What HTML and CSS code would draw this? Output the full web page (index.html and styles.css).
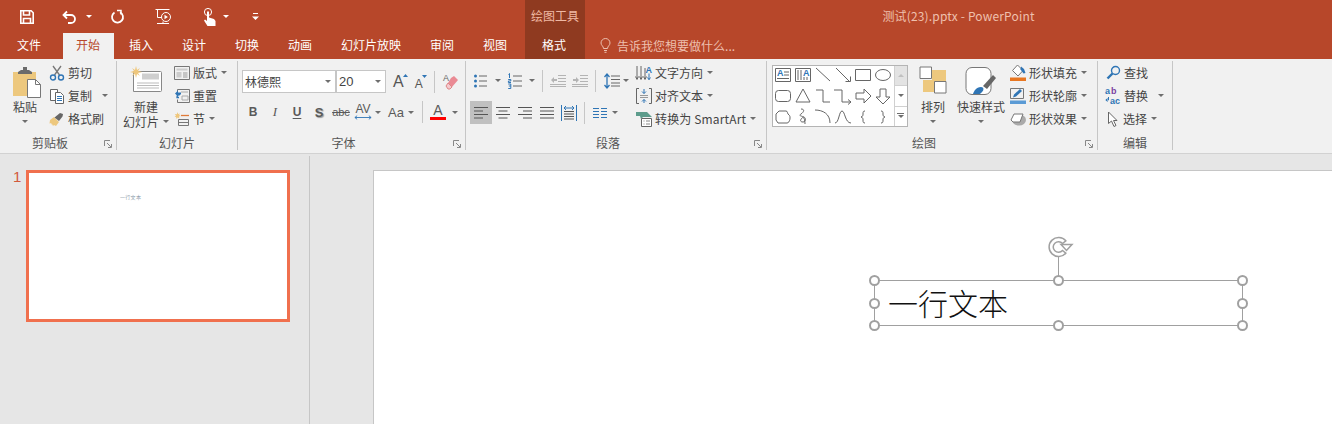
FILE: index.html
```html
<!DOCTYPE html>
<html lang="zh-CN">
<head>
    <meta charset="UTF-8">
    <meta name="viewport" content="width=device-width, initial-scale=1.0">
    <title>测试(23).pptx - PowerPoint</title>
    <link rel="stylesheet" href="styles.css">
</head>
<body>
    <header class="titlebar">
        <div class="qat">
            <svg class="qat-save" width="14" height="14" viewBox="0 0 14 14" fill="none" stroke="#fff" stroke-width="1.6"><path d="M.8.8h10.4l2 2v10.400H.8z"/><path d="M3.500 1v4h6V1M3.500 13V8.500h7V13"/></svg>
            <svg class="qat-undo" width="16" height="14" viewBox="0 0 16 14" fill="none" stroke="#fff" stroke-width="1.8"><path d="M5 1.500L1.500 5 5 8.500M1.500 5H9a4 4 0 0 1 0 8H6"/></svg>
            <span class="caret caret-white qat-undo-caret"></span>
            <svg class="qat-redo" width="14" height="14" viewBox="0 0 14 14" fill="none" stroke="#fff" stroke-width="1.8"><path d="M4.500 2.500A5.500 5.500 0 1 0 10 2.200"/><path d="M7 .5h4v4" stroke-width="1.500"/></svg>
            <svg class="qat-show" width="17" height="17" viewBox="0 0 17 17" fill="none" stroke="#fff"><path d="M.5 1.500h14M2.500 2v7.500h4"/><circle cx="11" cy="9" r="4.500"/><path d="M9.500 6.800l3.400 2.200-3.400 2.200z" fill="#fff" stroke="none"/><path d="M2 15.500h12M8 13.500v2"/></svg>
            <svg class="qat-touch" width="14" height="18" viewBox="0 0 14 18" fill="#fff"><circle cx="5" cy="4" r="3.600" fill="none" stroke="#fff"/><path d="M4 3.500h2v6l5 1.500 1.500 2V18H4.500L1 12.500l1-1 2 1.500z"/></svg>
            <span class="caret caret-white qat-touch-caret"></span>
            <svg class="qat-more" width="7" height="8" viewBox="0 0 7 8" fill="#fff"><path d="M1 0h5v1H1zM0 3.500h7L3.500 7z"/></svg>
        </div>
        <div class="context-title">绘图工具</div>
        <div class="doc-title">测试(23).pptx - PowerPoint</div>
    </header>

    <nav class="tabs">
        <span class="tab tab-file">文件</span>
        <span class="tab tab-active">开始</span>
        <span class="tab">插入</span>
        <span class="tab">设计</span>
        <span class="tab">切换</span>
        <span class="tab">动画</span>
        <span class="tab">幻灯片放映</span>
        <span class="tab">审阅</span>
        <span class="tab">视图</span>
        <span class="tab tab-context">格式</span>
        <span class="tell-me">
            <svg width="11" height="15" viewBox="0 0 11 15" fill="none" stroke="#ecc0b0"><path d="M3.500 10.500C3.500 8 1 7.500 1 5a4.500 4.500 0 0 1 9 0c0 2.500-2.500 3-2.500 5.500zM4 12.500h3M4.500 14.300h2"/></svg>
            告诉我您想要做什么...
        </span>
    </nav>

    <section class="ribbon">
        <!-- 剪贴板 -->
        <div class="group group-clip">
            <div class="group-body">
                <div class="big big-paste">
                    <div class="big-icon">
                        <svg width="30" height="31" viewBox="0 0 30 31"><path d="M1 5h23v24H1z" fill="#edc87e"/><path d="M6 5l3-2h2V0h4v3h2l3 2v2H6z" fill="#6b6b6b"/><path d="M15.500 12.500h8l5 5v13h-13z" fill="#fff" stroke="#777"/><path d="M23.500 12.500v5h5" fill="none" stroke="#777"/></svg>
                    </div>
                    <span>粘贴</span>
                    <span class="caret big-caret"></span>
                </div>
                <div class="col col-clip">
                    <div class="tool">
                        <svg width="16" height="16" viewBox="0 0 16 16" fill="none"><path d="M4 1l6.500 9M12 1L5.500 10" stroke="#777" stroke-width="1.300"/><circle cx="4" cy="12.500" r="2.500" stroke="#2f75b5" stroke-width="1.400"/><circle cx="12" cy="12.500" r="2.500" stroke="#2f75b5" stroke-width="1.400"/></svg>
                        <span>剪切</span>
                    </div>
                    <div class="tool">
                        <svg width="16" height="16" viewBox="0 0 16 16" fill="#fff" stroke="#666"><path d="M1.500 1.500h7v11h-7z"/><path d="M6.500 4.500h5l3 3v8h-8z"/><path d="M8 8.500h5M8 10.500h5M8 12.500h5" stroke="#2f75b5"/></svg>
                        <span>复制</span>
                        <span class="caret caret-copy"></span>
                    </div>
                    <div class="tool">
                        <svg width="16" height="16" viewBox="0 0 16 16"><path d="M1 9l4-3 5 5-3 4-2-1-1 1-1-2-1 .5 .5-1.500-2 .5z" fill="#edc87e"/><path d="M5.500 6.500L11 2l3 1-.5 2.500-3.500 4.500z" fill="#666"/></svg>
                        <span>格式刷</span>
                    </div>
                </div>
            </div>
            <div class="group-label"><span>剪贴板</span><svg class="launcher" width="8" height="8" viewBox="0 0 8 8" fill="none" stroke="#888"><path d="M.5 6V.5H6M3 3l4 4M7.500 4v3.500H4"/></svg></div>
        </div>

        <!-- 幻灯片 -->
        <div class="group group-slides">
            <div class="group-body">
                <div class="big big-new">
                    <div class="big-icon">
                        <svg width="32" height="26" viewBox="0 0 32 26"><path d="M3.500 5.500h27a1 1 0 0 1 1 1v18a1 1 0 0 1-1 1h-27z" fill="#fff" stroke="#888"/><path d="M12 7.500h17v6H12z" fill="#cfcfcf"/><path d="M7 17h22M7 19.500h22M7 22h22" stroke="#bbb"/><path d="M6 0l1 4 3-2-2 3 4 1-4 1 2 3-3-2-1 4-1-4-3 2 2-3-4-1 4-1-2-3 3 2z" fill="#efc77c"/></svg>
                    </div>
                    <span>新建</span>
                    <span class="big-line">幻灯片<i class="caret caret-new"></i></span>
                </div>
                <div class="col col-slides">
                    <div class="tool">
                        <svg width="16" height="16" viewBox="0 0 16 16" fill="none" stroke="#777"><path d="M.5 1.500h15v13H.5z"/><path d="M2.500 3.500h11v2h-11zM2.500 7h5v5.500h-5z" fill="#ccc" stroke="none"/><path d="M9 8h4.500M9 10h4.500M9 12h4.500" stroke="#999"/></svg>
                        <span>版式</span>
                        <span class="caret caret-slide"></span>
                    </div>
                    <div class="tool">
                        <svg width="16" height="16" viewBox="0 0 16 16" fill="none" stroke="#777"><path d="M3.500 5.500v-4h12v13h-12v-3"/><path d="M7 4h7M8 8h6v4H8z" stroke="#aaa"/><path d="M1 5.500l3-3v2h3v2H4v2z" fill="#2f75b5" stroke="none"/><path d="M6 6.500c-2 0-3 1-3 3h2" stroke="#2f75b5" stroke-width="1.300"/></svg>
                        <span>重置</span>
                    </div>
                    <div class="tool">
                        <svg width="16" height="16" viewBox="0 0 16 16" fill="none"><path d="M3.500 1l.6 2 1.900-.6-1 1.700 1.800.9-1.900.5.500 1.900-1.900-1-1 1.500-.400-1.900L.5 5.900l1.500-1.200L.8 3l2 .2z" fill="#efc77c"/><path d="M7 4.500h8" stroke="#e07b39" stroke-width="1.300"/><path d="M4.500 8.500h10v6h-10zM4.500 11.500h10" stroke="#777"/></svg>
                        <span>节</span>
                        <span class="caret caret-slide"></span>
                    </div>
                </div>
            </div>
            <div class="group-label"><span>幻灯片</span></div>
        </div>

        <!-- 字体 -->
        <div class="group group-font">
            <div class="font-rows">
                <div class="font-row-top">
                    <div class="combo combo-font"><span>林德熙</span><i class="caret"></i></div>
                    <div class="combo combo-size"><span>20</span><i class="caret"></i></div>
                    <span class="grow-a">A<svg width="5" height="3" viewBox="0 0 5 3"><path d="M0 3l2.500-3L5 3z" fill="#2f75b5"/></svg></span>
                    <span class="shrink-a">A<svg width="5" height="3" viewBox="0 0 5 3"><path d="M0 0l2.500 3L5 0z" fill="#2f75b5"/></svg></span>
                    <i class="vsep vsep-font"></i>
                    <svg class="eraser" width="16" height="17" viewBox="0 0 16 17"><path d="M8 5l3-2 4 4-6 7-4-4z" fill="#ea8a94"/><path d="M5 10l4 4-2 2H5l-2-3z" fill="#f5c9cd" stroke="#d88"/><text x="0" y="8" class="eraser-a">A</text></svg>
                </div>
                <div class="font-row-bottom">
                    <span class="f f-b">B</span>
                    <span class="f f-i">I</span>
                    <span class="f f-u">U</span>
                    <span class="f f-s">S</span>
                    <span class="f f-abc">abc</span>
                    <span class="f f-av">AV<svg width="18" height="5" viewBox="0 0 20 5" fill="none" stroke="#2f75b5"><path d="M1 2.500h18M3.500 .5l-2.500 2 2.500 2M16.500 .5l2.500 2-2.500 2"/></svg></span>
                    <i class="caret caret-av"></i>
                    <span class="f f-aa">Aa</span>
                    <i class="caret caret-aa"></i>
                    <i class="vsep vsep-color"></i>
                    <span class="f f-color">A</span>
                    <i class="caret caret-color"></i>
                </div>
            </div>
            <div class="group-label"><span>字体</span><svg class="launcher" width="8" height="8" viewBox="0 0 8 8" fill="none" stroke="#888"><path d="M.5 6V.5H6M3 3l4 4M7.500 4v3.500H4"/></svg></div>
        </div>

        <!-- 段落 -->
        <div class="group group-para">
            <div class="group-body">
                <div class="para-rows">
                    <div class="para-row-top">
                        <svg class="p-bullets" width="14" height="16" viewBox="0 0 14 16" fill="none" stroke="#666"><path d="M5 3h8M5 8h8M5 13h8"/><circle cx="1.500" cy="3" r="1.500" fill="#2f75b5" stroke="none"/><circle cx="1.500" cy="8" r="1.500" fill="#2f75b5" stroke="none"/><circle cx="1.500" cy="13" r="1.500" fill="#2f75b5" stroke="none"/></svg>
                        <i class="caret caret-list"></i>
                        <svg class="p-numbers" width="14" height="16" viewBox="0 0 14 16" fill="none" stroke="#666"><path d="M5 3h9M5 8h9M5 13h9"/><path d="M1.500 .5v4.500M.500 1.500l1-1M.2 6.500h2.600v1.500H.4v1.500h2.600M.2 11h2.600v4.500H.2M.8 13h2" stroke="#2f75b5"/></svg>
                        <i class="caret caret-list"></i>
                        <i class="vsep vsep-para1"></i>
                        <svg class="p-outdent" width="16" height="12" viewBox="0 0 16 12" fill="none" stroke="#b4b4b4"><path d="M8 .5h8M8 3.500h8M8 6.500h8M0 9.500h16M0 11.500h16"/><path d="M1 5l3-3v2h3v2H4v2z" fill="#b4b4b4" stroke="none"/></svg>
                        <svg class="p-indent" width="16" height="12" viewBox="0 0 16 12" fill="none" stroke="#b4b4b4"><path d="M8 .5h8M8 3.500h8M8 6.500h8M0 9.500h16M0 11.500h16"/><path d="M7 5L4 2v2H1v2h3v2z" fill="#b4b4b4" stroke="none"/></svg>
                        <i class="vsep vsep-para2"></i>
                        <svg class="p-spacing" width="16" height="16" viewBox="0 0 16 16" fill="none"><path d="M7 3h9M7 6.500h9M7 10h9M7 13h9" stroke="#666"/><path d="M3 1v14M.5 4L3 1l2.500 3M.5 12L3 15l2.500-3" stroke="#2f75b5" stroke-width="1.300"/></svg>
                        <i class="caret caret-spacing"></i>
                    </div>
                    <div class="para-row-bottom">
                        <span class="align align-active"><svg width="14" height="12" viewBox="0 0 14 12" stroke="#555"><path d="M0 .5h14M0 4h9M0 7.500h14M0 11h9"/></svg></span>
                        <span class="align"><svg width="14" height="12" viewBox="0 0 14 12" stroke="#555"><path d="M0 .5h14M2.500 4h9M0 7.500h14M2.500 11h9"/></svg></span>
                        <span class="align"><svg width="14" height="12" viewBox="0 0 14 12" stroke="#555"><path d="M0 .5h14M5 4h9M0 7.500h14M5 11h9"/></svg></span>
                        <span class="align"><svg width="14" height="12" viewBox="0 0 14 12" stroke="#555"><path d="M0 .5h14M0 4h14M0 7.500h14M0 11h14"/></svg></span>
                        <span class="align"><svg width="16" height="16" viewBox="0 0 16 16" fill="none"><path d="M3 6.500h10M3 9h10M3 11.500h10M3 14h10" stroke="#555"/><path d="M.5 0v16M15.500 0v16M3 3h10M5 1L3 3l2 2M11 1l2 2-2 2" stroke="#2f75b5"/></svg></span>
                        <i class="vsep vsep-para3"></i>
                        <svg class="p-cols" width="14" height="10" viewBox="0 0 14 10" stroke="#2f75b5"><path d="M0 .5h6M8 .5h6M0 3.500h6M8 3.500h6M0 6.500h6M8 6.500h6M0 9.500h6M8 9.500h6"/></svg>
                        <i class="caret caret-cols"></i>
                    </div>
                </div>
                <div class="col col-para">
                    <div class="tool">
                        <svg width="16" height="16" viewBox="0 0 16 16" fill="none"><path d="M1 1v13M5 1v13M9 3v11M-.5 11.500l1.500 3 1.500-3M3.500 11.500l1.500 3 1.500-3M7.500 11.500l1.500 3 1.500-3" stroke="#666"/><text x="9.500" y="7.500" class="dir-a">A</text><path d="M13 8.500v6M11.500 12.500l1.500 2.200 1.500-2.200" stroke="#2f75b5"/></svg>
                        <span>文字方向</span>
                        <span class="caret caret-slide"></span>
                    </div>
                    <div class="tool">
                        <svg width="16" height="16" viewBox="0 0 16 16" fill="none"><path d="M3 .5H.5v15H3M13 .5h2.500v15H13" stroke="#666"/><path d="M4 7.500h8M4 9.500h8" stroke="#999"/><path d="M8 1v4.500M6 3.500l2 2 2-2M8 15v-3.500M6 13.500l2-2 2 2" stroke="#2f75b5"/></svg>
                        <span>对齐文本</span>
                        <span class="caret caret-slide"></span>
                    </div>
                    <div class="tool">
                        <svg width="16" height="16" viewBox="0 0 16 16"><path d="M0 1h11l5 5h-9l-2 2-1-3H0z" fill="#5d9c8c"/><path d="M5.500 7.500h10v8h-10z" fill="#fff" stroke="#666"/><path d="M7.500 10h1M10 10h4M7.500 13h1M10 13h4" stroke="#888"/></svg>
                        <span class="smartart">转换为 SmartArt</span>
                        <span class="caret caret-slide"></span>
                    </div>
                </div>
            </div>
            <div class="group-label"><span>段落</span><svg class="launcher" width="8" height="8" viewBox="0 0 8 8" fill="none" stroke="#888"><path d="M.5 6V.5H6M3 3l4 4M7.500 4v3.500H4"/></svg></div>
        </div>

        <!-- 绘图 -->
        <div class="group group-draw">
            <div class="group-body">
                <div class="gallery">
                    <div class="shapes">
                        <svg class="shape" viewBox="0 0 20 20"><path d="M2.500 4.500h15v13h-15z"/><text x="4" y="12" class="shape-a">A</text><path d="M11 8h5M11 11h5M4 14.500h12"/></svg>
                        <svg class="shape" viewBox="0 0 20 20"><path d="M2.500 4.500h15v13h-15z"/><text x="10" y="12" class="shape-a">A</text><path d="M5 6v10M8 6v10M11 13v3M14 13v3"/></svg>
                        <svg class="shape" viewBox="0 0 20 20"><path d="M3 4l14 13"/></svg>
                        <svg class="shape" viewBox="0 0 20 20"><path d="M3 4l14 14M12.500 17.500H17.500V12.500"/></svg>
                        <svg class="shape" viewBox="0 0 20 20"><path d="M2.500 5.500h15v11h-15z"/></svg>
                        <svg class="shape" viewBox="0 0 20 20"><ellipse cx="10" cy="11" rx="7.500" ry="5.500"/></svg>
                        <svg class="shape" viewBox="0 0 20 20"><rect x="2.500" y="5.500" width="15" height="11" rx="3"/></svg>
                        <svg class="shape" viewBox="0 0 20 20"><path d="M10 4l7 13H3z"/></svg>
                        <svg class="shape" viewBox="0 0 20 20"><path d="M3 5h7v12h7"/></svg>
                        <svg class="shape" viewBox="0 0 20 20"><path d="M1 5h8v12h9M15 14.500l3 2.500-3 2.500"/></svg>
                        <svg class="shape" viewBox="0 0 20 20"><path d="M3 8h8V4l7 7-7 7v-4H3z"/></svg>
                        <svg class="shape" viewBox="0 0 20 20"><path d="M7 4h6v8h4l-7 7-7-7h4z"/></svg>
                        <svg class="shape" viewBox="0 0 20 20"><path d="M3 8l3-3h7c2 0 1 3 3 4s1 8-2 8H5l-2-3z"/></svg>
                        <svg class="shape" viewBox="0 0 20 20"><path d="M8 3c4 0 3 3 0 5s1 2 3 3 2 5-1 5-3-2-1-4 3 2 3 6"/></svg>
                        <svg class="shape" viewBox="0 0 20 20"><path d="M2 4c8 0 15 4 15 13"/></svg>
                        <svg class="shape" viewBox="0 0 20 20"><path d="M2 17C6 17 6 5 9 5s3 12 9 12"/></svg>
                        <svg class="shape" viewBox="0 0 20 20"><path d="M12 5c-2 0-2 1-2 3s0 2-2 3c2 1 2 1 2 3s0 3 2 3"/></svg>
                        <svg class="shape" viewBox="0 0 20 20"><path d="M8 5c2 0 2 1 2 3s0 2 2 3c-2 1-2 1-2 3s0 3-2 3"/></svg>
                    </div>
                    <div class="gallery-scroll">
                        <span class="scroll-up"><i class="caret caret-up"></i></span>
                        <span><i class="caret"></i></span>
                        <span class="scroll-more"><i class="caret"></i></span>
                    </div>
                </div>
                <div class="big big-arrange">
                    <div class="big-icon">
                        <svg width="28" height="28" viewBox="0 0 28 28"><path d="M13 4h14v11H13zM4 14h14v12H4z" fill="#edc87e"/><path d="M1 1h11.500v11.500H1zM15.500 15.500H27V27H15.500z" fill="#fff" stroke="#777"/></svg>
                    </div>
                    <span>排列</span>
                    <span class="caret big-caret"></span>
                </div>
                <div class="big big-style">
                    <div class="big-icon">
                        <svg width="32" height="30" viewBox="0 0 32 30"><rect x="1" y=".5" width="25" height="27" rx="6" fill="#fff" stroke="#777"/><path d="M18 19L28 8l3 3-9 11z" fill="#666"/><path d="M8 27c1-3 3-7 8-7 3 0 3 3 1 5s-2 2-3 2z" fill="#2f75b5"/></svg>
                    </div>
                    <span>快速样式</span>
                    <span class="caret big-caret"></span>
                </div>
                <div class="col col-format">
                    <div class="tool">
                        <svg width="16" height="16" viewBox="0 0 16 16"><path d="M7.500 0l5.500 5.500-5 5.500L2.500 5.500z" fill="#fff" stroke="#777"/><path d="M11 1.500l3 2.500 1.500 4-2 .5-3-4z" fill="#2f75b5"/><path d="M0 12.500h16V16H0z" fill="#e87722"/></svg>
                        <span>形状填充</span>
                        <span class="caret caret-slide"></span>
                    </div>
                    <div class="tool">
                        <svg width="16" height="16" viewBox="0 0 16 16" fill="none"><path d="M.5 .5h13v10H.5z" stroke="#777"/><path d="M3 9.500l1-3 6-5.500 2 2-6 5.500z" fill="#2f75b5"/><path d="M0 12.500h16V16H0z" fill="#5b9bd5"/></svg>
                        <span>形状轮廓</span>
                        <span class="caret caret-slide"></span>
                    </div>
                    <div class="tool">
                        <svg width="16" height="14" viewBox="0 0 16 14"><ellipse cx="9" cy="8" rx="7" ry="5.500" fill="#aaa"/><path d="M1 8l3-6h9l-3 8H3z" fill="#fff" stroke="#777"/></svg>
                        <span>形状效果</span>
                        <span class="caret caret-slide"></span>
                    </div>
                </div>
            </div>
            <div class="group-label"><span>绘图</span><svg class="launcher" width="8" height="8" viewBox="0 0 8 8" fill="none" stroke="#888"><path d="M.5 6V.5H6M3 3l4 4M7.500 4v3.500H4"/></svg></div>
        </div>

        <!-- 编辑 -->
        <div class="group group-edit">
            <div class="group-body">
                <div class="col col-edit">
                    <div class="tool">
                        <svg width="15" height="15" viewBox="0 0 15 15" fill="none" stroke="#2f75b5"><circle cx="9.500" cy="5.500" r="4" stroke-width="1.400"/><path d="M6.500 8.500L1.500 13.500" stroke-width="2.400"/></svg>
                        <span>查找</span>
                    </div>
                    <div class="tool">
                        <svg width="16" height="16" viewBox="0 0 16 16" class="replace-icon"><text x="0" y="6" class="rep-ab">a</text><text x="6" y="6" class="rep-b">b</text><text x="5" y="16" class="rep-ac">ac</text><path d="M3.500 9v3H1M2.500 10.500L.8 12l1.700 1.500" fill="none" stroke="#2f75b5"/></svg>
                        <span>替换</span>
                        <span class="caret caret-replace"></span>
                    </div>
                    <div class="tool">
                        <svg width="14" height="16" viewBox="0 0 14 16"><path d="M2.500 1v11.500l3-2.500 2.500 5.500 2-1L7.500 9.500H11z" fill="#fff" stroke="#666"/></svg>
                        <span>选择</span>
                        <span class="caret caret-slide"></span>
                    </div>
                </div>
            </div>
            <div class="group-label"><span>编辑</span></div>
        </div>
    </section>

    <main class="workspace">
        <aside class="thumbs">
            <span class="thumb-num">1</span>
            <div class="thumb">
                <span class="thumb-text">一行文本</span>
            </div>
        </aside>
        <div class="canvas">
            <div class="slide">
                <div class="selection">
                    <span class="slide-text">一行文本</span>
                    <i class="stem"></i>
                    <svg class="rotate" width="28" height="22" viewBox="0 0 28 22" fill="#fff" stroke="#a0a0a0" stroke-width="1.500"><path d="M18.800 4.800A9.500 9.500 0 1 0 18.800 17.200L15.500 14.500A5.300 5.300 0 1 1 15.500 7.500z"/><path d="M14 8.500h11l-5.500 6z"/></svg>
                    <i class="handle h-tl"></i><i class="handle h-tc"></i><i class="handle h-tr"></i>
                    <i class="handle h-ml"></i><i class="handle h-mr"></i>
                    <i class="handle h-bl"></i><i class="handle h-bc"></i><i class="handle h-br"></i>
                </div>
            </div>
        </div>
    </main>
</body>
</html>
```

FILE: styles.css
```css
* { box-sizing: border-box; }
html, body { margin: 0; height: 100%; }
body {
    width: 1332px;
    height: 424px;
    overflow: hidden;
    font-family: "Noto Sans CJK SC", "Liberation Sans", sans-serif;
    font-size: 12px;
    color: #444;
    background-color: #e6e6e6;
}
i { font-style: normal; display: block; }
svg { display: block; flex: none; overflow: visible; }

.caret {
    display: block;
    flex: none;
    width: 0;
    height: 0;
    border-top: 3px solid #6e6e6e;
    border-left: 3px solid transparent;
    border-right: 3px solid transparent;
}
.caret-white { border-top-color: #fff; }
.caret-up { border-top: none; border-bottom: 3px solid #c0c0c0; }

/* title bar */
.titlebar { display: flex; height: 33px; background-color: #b7472a; color: #fff; }
.qat { width: 525px; display: flex; align-items: center; padding-left: 20px; }
.qat-undo { margin-left: 28px; }
.qat-undo-caret { margin-left: 8px; }
.qat-redo { margin-left: 18px; }
.qat-show { margin-left: 31px; }
.qat-touch { margin-left: 31px; }
.qat-touch-caret { margin-left: 6px; }
.qat-more { margin-left: 23px; }
.context-title { width: 60px; line-height: 32px; text-align: center; background-color: #8f3a20; color: #efb9a4; }
.doc-title { flex: 1; line-height: 32px; text-align: center; letter-spacing: .16px; color: #efc0ae; }

/* tabs */
.tabs { display: flex; height: 26px; background-color: #b7472a; color: #fff; }
.tab { padding: 0 15px 0 14px; line-height: 24px; white-space: nowrap; }
.tab-file { width: 63px; padding-left: 17px; padding-right: 0; }
.tab-active { width: 51px; padding: 0 0 0 13px; background-color: #f1f1f1; color: #b7472a; }
.tab-active + .tab { padding-left: 15px; }
.tab-context { width: 60px; margin-left: 3px; padding: 0 0 0 17px; background-color: #8f3a20; }
.tell-me { display: flex; align-items: center; gap: 6px; margin-left: 15px; padding-bottom: 1px; color: #edbfae; }

/* ribbon */
.ribbon { display: flex; height: 95px; padding-top: 2px; background-color: #f1f1f1; border-bottom: 1px solid #d2d2d2; }
.group { display: flex; flex-direction: column; height: 89px; border-right: 1px solid #c6c6c6; }
.group-clip { width: 117px; }
.group-slides { width: 121px; }
.group-font { width: 228px; }
.group-para { width: 301px; }
.group-draw { width: 331px; }
.group-edit { width: 75px; }
.group-body { flex: 1; display: flex; }
.group-label { display: flex; align-items: center; height: 14px; padding-bottom: 2px; color: #555; }
.group-label span { flex: 1; text-align: center; }
.launcher { margin: 4px 4px 0 4px; }

.col { display: flex; flex-direction: column; }
.tool { display: flex; align-items: center; height: 23px; white-space: nowrap; }
.tool span:not(.caret) { margin-left: 3px; }
.caret-slide { margin-left: 4px; }
.caret-copy { margin-left: 10px; }
.caret-replace { margin-left: 10px; }
.smartart { letter-spacing: .15px; }

.big { display: flex; flex-direction: column; align-items: center; white-space: nowrap; }
.big-icon { height: 38px; padding-bottom: 1px; display: flex; align-items: flex-end; }
.big span { line-height: 15px; }
.big-caret { margin-top: 6px; }
.big-line { display: flex; align-items: center; }

.big-paste { width: 26px; margin-left: 12px; }
.big-paste .big-icon { align-self: flex-start; }
.col-clip { margin-left: 11px; }
.big-new { width: 46px; margin-left: 6px; }
.big-new .big-icon { padding-bottom: 7px; }
.big-new svg { margin-right: 1px; }
.caret-new { margin-left: 4px; }
.col-slides { margin-left: 5px; }

/* font group */
.font-rows { flex: 1; padding-left: 4px; }
.font-row-top { display: flex; align-items: center; height: 32px; padding-top: 9px; }
.combo {
    display: flex;
    align-items: center;
    justify-content: space-between;
    height: 23px;
    padding: 0 4px 0 2px;
    background-color: #fff;
    border: 1px solid #c6c6c6;
}
.combo-font { width: 94px; }
.combo-size { width: 50px; font-family: "Liberation Sans", sans-serif; font-size: 13px; }
.grow-a, .shrink-a { display: flex; font-family: "Liberation Sans", sans-serif; color: #555; }
.grow-a { margin-left: 7px; font-size: 16px; line-height: 18px; }
.shrink-a { margin-left: 7px; font-size: 12px; line-height: 14px; padding-top: 4px; }
.grow-a svg { margin: 1px 0 0 -1px; }
.shrink-a svg { margin: -2px 0 0 -1px; }
.vsep { flex: none; width: 1px; background-color: #c6c6c6; }
.vsep-font { height: 22px; margin-left: 7px; }
.eraser { margin-left: 8px; }
.eraser-a { font: 9px "Liberation Sans", sans-serif; fill: #666; }

.font-row-bottom { display: flex; align-items: center; height: 24px; margin-top: 7px; font-family: "Liberation Sans", sans-serif; color: #5a5a5a; }
.f { display: block; text-align: center; flex: none; }
.f-b { width: 22px; font-weight: bold; font-size: 12px; }
.f-i { width: 22px; font-style: italic; font-family: "Liberation Serif", serif; font-size: 13px; }
.f-u { width: 22px; text-decoration: underline; text-underline-offset: 2px; font-size: 12px; font-weight: bold; }
.f-s { width: 22px; font-weight: bold; font-size: 13px; text-shadow: 1px 1px 1px #999; }
.f-abc { width: 22px; text-decoration: line-through; font-size: 11px; }
.f-av { width: 22px; font-size: 12px; line-height: 11px; }
.f-av svg { margin: 0 auto; }
.caret-av { margin-left: 1px; }
.f-aa { width: 20px; margin-left: 5px; font-size: 13px; }
.caret-aa { margin-left: 2px; }
.vsep-color { height: 22px; margin-left: 8px; }
.f-color { width: 16px; margin-left: 7px; height: 16px; font-size: 14px; line-height: 13px; border-bottom: 3px solid #f00; }
.caret-color { margin-left: 6px; }

/* paragraph group */
.para-rows { width: 170px; }
.para-row-top { display: flex; align-items: center; height: 34px; padding: 5px 0 0 8px; }
.caret-list { margin: 0 7px; }
.vsep-para1 { height: 22px; margin: 0 7px 0 0; }
.p-indent { margin-left: 6px; }
.vsep-para2 { height: 22px; margin: 0 8px 0 7px; }
.caret-spacing { margin-left: 3px; }
.para-row-bottom { display: flex; align-items: center; height: 23px; margin-top: 6px; padding-left: 4px; }
.align { flex: none; display: flex; align-items: center; justify-content: center; width: 22px; height: 23px; }
.align-active { background-color: #c0c0c0; }
.vsep-para3 { height: 22px; margin: 0 8px 0 4px; }
.caret-cols { margin-left: 5px; }
.dir-a { font: bold 9px "Liberation Sans", sans-serif; fill: #2f75b5; }

/* drawing group */
.gallery { display: flex; height: 62px; margin: 4px 0 0 5px; background-color: #fff; border: 1px solid #b4b4b4; }
.shapes { display: grid; grid-template-columns: repeat(6, 20px); grid-auto-rows: 21px; width: 121px; margin-top: -2px; }
.shape { width: 20px; height: 20px; fill: none; stroke: #666; }
.shape text { stroke: none; }
.shape-a { font: bold 9px "Liberation Sans", sans-serif; fill: #2f75b5; }
.gallery-scroll { display: flex; flex-direction: column; width: 13px; border-left: 1px solid #d0d0d0; }
.gallery-scroll span { flex: 1; display: flex; align-items: center; justify-content: center; border-bottom: 1px solid #d0d0d0; }
.gallery-scroll span:last-child { border-bottom: none; }
.scroll-up { background-color: #e3e3e3; }
.scroll-more { position: relative; }
.scroll-more::before { content: ""; position: absolute; left: 2px; top: 6px; width: 7px; height: 1px; background-color: #6e6e6e; }
.big-arrange { width: 28px; margin-left: 11px; }
.big-arrange .big-icon { padding-bottom: 5px; }
.big-style { width: 50px; margin-left: 9px; }
.big-style .big-icon { padding-bottom: 2px; }
.col-format { margin-left: 4px; }

/* editing group */
.col-edit { margin-left: 8px; }
.replace-icon { margin-left: -1px; }
.replace-icon text { font-family: "Liberation Sans", sans-serif; font-size: 9px; font-weight: bold; }
.rep-ab { fill: #2f75b5; }
.rep-b { fill: #7a3fa0; }
.rep-ac { fill: #2f75b5; }

/* work area */
.workspace { display: flex; height: 270px; }
.thumbs { display: flex; align-items: flex-start; width: 310px; padding: 14px 0 0 13px; background-color: #e6e6e6; border-right: 1px solid #c6c6c6; margin-top: 2px; }
.thumb-num { width: 13px; margin-top: -2px; font: 15px/17px "Liberation Sans", sans-serif; color: #d2593c; }
.thumb { width: 264px; height: 152px; padding: 21px 0 0 91px; background-color: #fff; border: 3px solid #f0704e; }
.thumb-text { display: block; font-size: 5px; line-height: 6px; letter-spacing: .3px; color: #8a9aa8; }
.canvas { flex: 1; padding: 16px 0 0 63px; overflow: hidden; }
.slide { position: relative; height: 100%; background-color: #fff; border-left: 1px solid #c6c6c6; border-top: 1px solid #c6c6c6; }

.selection { position: absolute; left: 500px; top: 109px; width: 369px; height: 46px; display: flex; align-items: center; padding: 0 0 2px 13px; border: 1px solid #a0a0a0; }
.slide-text { font-size: 30px; font-weight: 300; line-height: 40px; color: #111; }
.stem { position: absolute; left: 183px; top: -24px; width: 1px; height: 24px; background-color: #a0a0a0; }
.rotate { position: absolute; left: 172px; top: -45px; }
.handle { position: absolute; width: 11px; height: 11px; background-color: #fff; border: 2px solid #a0a0a0; border-radius: 50%; }
.h-tl { left: -6px; top: -6px; }
.h-tc { left: 178px; top: -6px; }
.h-tr { left: 362px; top: -6px; }
.h-ml { left: -6px; top: 17px; }
.h-mr { left: 362px; top: 17px; }
.h-bl { left: -6px; top: 39px; }
.h-bc { left: 178px; top: 39px; }
.h-br { left: 362px; top: 39px; }
```
